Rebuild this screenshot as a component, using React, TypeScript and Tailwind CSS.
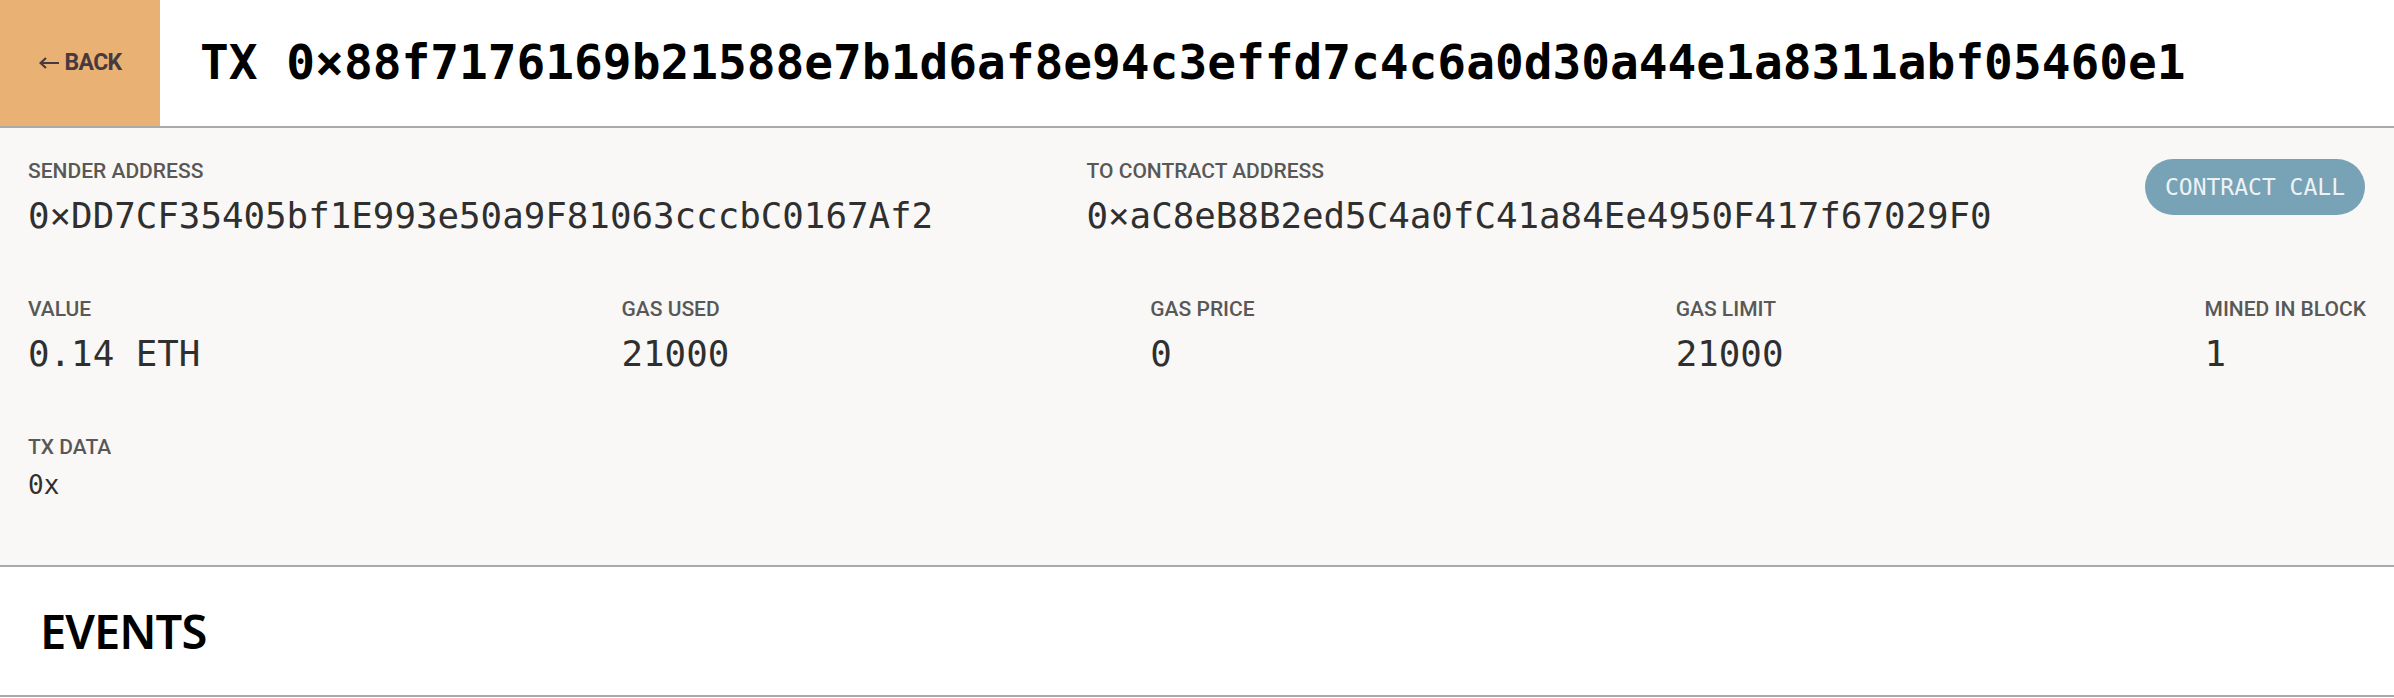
const mono = "font-['DejaVu_Sans_Mono',monospace]";
const label = "font-['Roboto',sans-serif] text-[21px] leading-[25px] font-medium text-[#585858] uppercase";

const Field = ({ title, value, small }: { title: string; value: string; small?: boolean }) => (
  <div className="flex flex-col">
    <span className={label}>{title}</span>
    <span
      className={`${mono} text-[#2f2f2f] whitespace-nowrap ${
        small ? 'text-[26px] leading-[31px] mt-2.5' : 'text-[35.8px] leading-[43px] mt-2.5'
      }`}
    >
      {value}
    </span>
  </div>
);

const stats = [
  { title: 'Value', value: '0.14 ETH' },
  { title: 'Gas used', value: '21000' },
  { title: 'Gas price', value: '0' },
  { title: 'Gas limit', value: '21000' },
  { title: 'Mined in block', value: '1' },
];

export default function App() {
  return (
    <div className="min-h-screen bg-white">
      {/* Header */}
      <div className="flex h-[128px] border-b-2 border-[#aaaaaa]">
        <button className="w-[160px] shrink-0 bg-[#e9b174] flex items-center justify-center gap-1.5 font-['Roboto',sans-serif] font-bold text-[23px] tracking-[-0.03em] text-[#473a3e]">
          <svg width="20" height="12" viewBox="0 0 20 12" fill="none" stroke="currentColor" strokeWidth="2.2">
            <path d="M20 6H2M7 1 1.5 6 7 11" />
          </svg>
          BACK
        </button>
        <h1 className={`${mono} ml-10 flex items-center text-[47.8px] font-bold text-black whitespace-nowrap`}>
          TX 0×88f7176169b21588e7b1d6af8e94c3effd7c4c6a0d30a44e1a8311abf05460e1
        </h1>
      </div>

      {/* Details */}
      <div className="bg-[#f9f8f6] border-b-2 border-[#aaaaaa] px-7 pt-[31px] pb-[64px]">
        <div className="flex items-start justify-between">
          <Field title="Sender address" value="0×DD7CF35405bf1E993e50a9F81063cccbC0167Af2" />
          <Field title="To contract address" value="0×aC8eB8B2ed5C4a0fC41a84Ee4950F417f67029F0" />
          <span className={`${mono} mr-px h-[56px] px-5 flex items-center rounded-full bg-[#78a3b6] text-[#eef2f4] text-[23px]`}>
            CONTRACT CALL
          </span>
        </div>

        <div className="flex justify-between mt-[60px]">
          {stats.map((s) => (
            <Field key={s.title} title={s.title} value={s.value} />
          ))}
        </div>

        <div className="mt-[60px]">
          <Field title="Tx data" value="0x" small />
        </div>
      </div>

      {/* Events */}
      <div className="h-[130px] px-10 flex items-center border-b-2 border-[#aaaaaa]">
        <h2 className="font-['Noto_Sans',sans-serif] font-semibold text-[47px] tracking-[-0.02em] text-black">EVENTS</h2>
      </div>
    </div>
  );
}
